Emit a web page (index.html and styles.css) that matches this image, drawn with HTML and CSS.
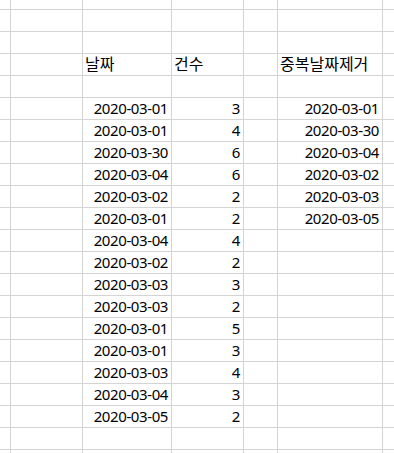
FILE: index.html
```html
<!DOCTYPE html>
<html lang="ko">
<head>
<meta charset="utf-8">
<link rel="stylesheet" href="styles.css">
</head>
<body>
<div class="sheet">
  <div class="row top"><div></div><div></div><div></div><div></div><div></div><div></div><div></div></div>
  <div class="row"><div></div><div></div><div></div><div></div><div></div><div></div><div></div></div>
  <div class="row"><div></div><div></div><div></div><div></div><div></div><div></div><div></div></div>
  <div class="row"><div></div><div></div><div class="txt">날짜</div><div class="txt">건수</div><div></div><div class="txt">중복날짜제거</div><div></div></div>
  <div class="row"><div></div><div></div><div></div><div></div><div></div><div></div><div></div></div>
  <div class="row"><div></div><div></div><div class="num">2020-03-01</div><div class="num">3</div><div></div><div class="num">2020-03-01</div><div></div></div>
  <div class="row"><div></div><div></div><div class="num">2020-03-01</div><div class="num">4</div><div></div><div class="num">2020-03-30</div><div></div></div>
  <div class="row"><div></div><div></div><div class="num">2020-03-30</div><div class="num">6</div><div></div><div class="num">2020-03-04</div><div></div></div>
  <div class="row"><div></div><div></div><div class="num">2020-03-04</div><div class="num">6</div><div></div><div class="num">2020-03-02</div><div></div></div>
  <div class="row"><div></div><div></div><div class="num">2020-03-02</div><div class="num">2</div><div></div><div class="num">2020-03-03</div><div></div></div>
  <div class="row"><div></div><div></div><div class="num">2020-03-01</div><div class="num">2</div><div></div><div class="num">2020-03-05</div><div></div></div>
  <div class="row"><div></div><div></div><div class="num">2020-03-04</div><div class="num">4</div><div></div><div></div><div></div></div>
  <div class="row"><div></div><div></div><div class="num">2020-03-02</div><div class="num">2</div><div></div><div></div><div></div></div>
  <div class="row"><div></div><div></div><div class="num">2020-03-03</div><div class="num">3</div><div></div><div></div><div></div></div>
  <div class="row"><div></div><div></div><div class="num">2020-03-03</div><div class="num">2</div><div></div><div></div><div></div></div>
  <div class="row"><div></div><div></div><div class="num">2020-03-01</div><div class="num">5</div><div></div><div></div><div></div></div>
  <div class="row"><div></div><div></div><div class="num">2020-03-01</div><div class="num">3</div><div></div><div></div><div></div></div>
  <div class="row"><div></div><div></div><div class="num">2020-03-03</div><div class="num">4</div><div></div><div></div><div></div></div>
  <div class="row"><div></div><div></div><div class="num">2020-03-04</div><div class="num">3</div><div></div><div></div><div></div></div>
  <div class="row"><div></div><div></div><div class="num">2020-03-05</div><div class="num">2</div><div></div><div></div><div></div></div>
  <div class="row"><div></div><div></div><div></div><div></div><div></div><div></div><div></div></div>
  <div class="row"><div></div><div></div><div></div><div></div><div></div><div></div><div></div></div>
</div>
</body>
</html>
```
FILE: styles.css
```css
html, body {
  margin: 0;
  padding: 0;
  background: #ffffff;
  overflow: hidden;
}

.sheet {
  display: flex;
  flex-direction: column;
  gap: 1px;
  background: #d4d4d4;
  width: 394px;
  font-family: "Noto Sans", "Noto Sans CJK KR", sans-serif;
  font-size: 15px;
  color: #000000;
}

.row {
  display: grid;
  grid-template-columns: 10px 71px 88px 71px 33px 104px minmax(0, 1fr);
  gap: 1px;
  height: 21px;
  line-height: 21px;
}

.row.top {
  height: 9px;
}

.row > div {
  background: #ffffff;
  white-space: nowrap;
  overflow: hidden;
}

.txt {
  padding-left: 2px;
  text-align: left;
  font-size: 16px;
}

.num {
  padding-right: 3px;
  text-align: right;
  letter-spacing: -0.4px;
}
```
